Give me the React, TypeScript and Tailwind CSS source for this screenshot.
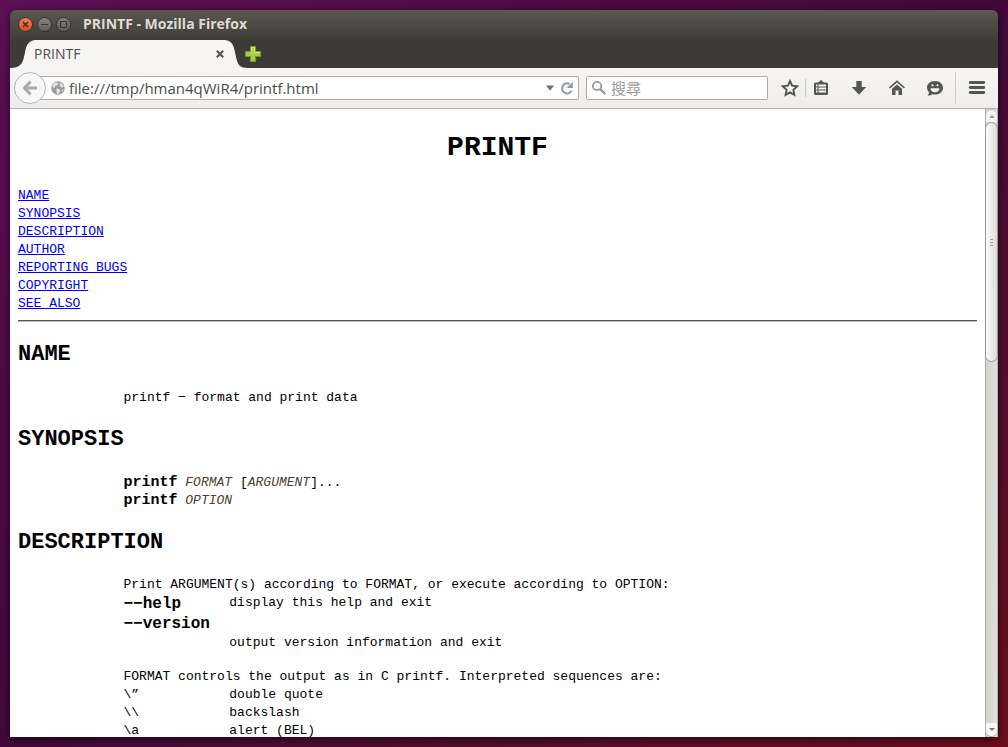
import React, { useState } from 'react';

const toc = ['NAME', 'SYNOPSIS', 'DESCRIPTION', 'AUTHOR', 'REPORTING BUGS', 'COPYRIGHT', 'SEE ALSO'];

const escapes = [
  { seq: '\\”', text: 'double quote' },
  { seq: '\\\\', text: 'backslash' },
  { seq: '\\a', text: 'alert (BEL)' },
];

const TitleBar = () => (
  <header className="flex h-[30px] items-center bg-linear-to-b from-[#5b5850] to-[#3e3d39] px-2 pb-0.5">
    <div className="flex gap-1">
      <button aria-label="Close" className="flex size-[15px] items-center justify-center rounded-full border border-[#33322e] bg-linear-to-b from-[#f37a54] to-[#dc4e1f] text-[#4a2010]">
        <svg viewBox="0 0 9 9" className="size-[9px]" stroke="currentColor" strokeWidth="1.4"><path d="M2 2l5 5M7 2L2 7" /></svg>
      </button>
      <button aria-label="Minimize" className="flex size-[15px] items-center justify-center rounded-full border border-[#33322e] bg-linear-to-b from-[#85837b] to-[#63615a] text-[#35342f]">
        <svg viewBox="0 0 9 9" className="size-[9px]" stroke="currentColor" strokeWidth="1.2"><path d="M1 4.500h7" /></svg>
      </button>
      <button aria-label="Maximize" className="flex size-[15px] items-center justify-center rounded-full border border-[#33322e] bg-linear-to-b from-[#85837b] to-[#63615a] text-[#35342f]">
        <svg viewBox="0 0 9 9" className="size-[9px]" fill="none" stroke="currentColor" strokeWidth="1.2"><path d="M1.500 1.500h6v6h-6z" /></svg>
      </button>
    </div>
    <p className="ml-3 text-sm font-bold text-[#dfdbd2]">PRINTF - Mozilla Firefox</p>
  </header>
);

const TabBar = () => (
  <div className="flex h-7 items-end bg-[#3c3b37]">
    <svg viewBox="0 0 28 28" className="h-7 w-7 shrink-0">
      <path d="M0 28C8 28 12 25 13.500 19L15.500 10C17 3 20 0 28 0V28Z" fill="#f6f5f4" />
    </svg>
    <div className="-ml-1 flex h-7 w-[190px] items-center justify-between bg-[#f6f5f4] text-[#4c4c4c]">
      <span className="text-sm">PRINTF</span>
      <button aria-label="Close tab" className="text-[#555551]">
        <svg viewBox="0 0 8 8" className="size-2" stroke="currentColor" strokeWidth="2.2"><path d="M.8.8l6.400 6.400M7.200.8L.8 7.200" /></svg>
      </button>
    </div>
    <svg viewBox="4 0 24 28" className="h-7 w-6 shrink-0">
      <path d="M28 28C20 28 18 25 16.500 19L14.500 10C13 3 10 0 2 0H0V28Z" fill="#f6f5f4" />
    </svg>
    <button aria-label="New tab" className="-ml-1 mb-[5px]">
      <svg viewBox="0 0 18 18" className="size-[18px]">
        <path d="M6.500 1.500h5v5h5v5h-5v5h-5v-5h-5v-5h5z" fill="#a9cc4c" stroke="#6f9a23" strokeWidth="1.200" />
        <path d="M7.500 7.500v-5h3v5h5" fill="none" stroke="#d5ea8b" />
      </svg>
    </button>
  </div>
);

const ToolButton = ({ label, children }: { label: string; children: React.ReactNode }) => (
  <button aria-label={label} className="flex h-8 w-[30px] shrink-0 items-center justify-center text-[#555552]">
    <svg viewBox="0 0 18 18" className="size-[18px]">{children}</svg>
  </button>
);

const NavBar = () => {
  const [url, setUrl] = useState('file:///tmp/hman4qWiR4/printf.html');
  const [query, setQuery] = useState('');

  return (
    <nav className="flex h-[41px] items-center border-b border-[#b5b0a8] bg-linear-to-b from-[#f6f5f4] to-[#eeedeb] pr-1.5 pl-1">
      <button aria-label="Back" className="z-10 flex size-8 shrink-0 items-center justify-center rounded-full border border-[#b2b5ba] bg-[#f7f7f7] text-[#aaa]">
        <svg viewBox="0 0 16 16" className="size-4" fill="none" stroke="currentColor" strokeWidth="3"><path d="M8.500 1.500L2.500 8l6 6.500M3 8h12" /></svg>
      </button>
      <div className="-ml-2 flex h-6 min-w-0 flex-1 items-center rounded-r-xs border border-[#b0aca5] bg-white pl-3">
        <svg viewBox="0 0 14 14" className="size-3.5 shrink-0">
          <circle cx="7" cy="7" r="6.800" fill="#9c9c9c" />
          <path d="M2.200 2.800L5 1.200l2.200 1L6 4.300 4 5 3.500 7 1.500 6.300zM8.500 2l2.800.8 1.500 3-2 .7L9 5zM5.500 7.500l3 .8.800 1.700-2 3-1.500-.5zM10.500 9l2-.8-1 2.600z" fill="#e4e4e4" />
        </svg>
        <input aria-label="Address" value={url} onChange={e => setUrl(e.target.value)} className="ml-1 min-w-0 flex-1 bg-transparent text-[15px] text-[#4c4c4c] outline-none" />
        <button aria-label="Show history" className="text-[#73716d]">
          <svg viewBox="0 0 8 6" className="h-1.5 w-2" fill="currentColor"><path d="M0 .5h8L4 5.800z" /></svg>
        </button>
        <button aria-label="Reload" className="mr-1 ml-1.5 text-[#8b9bb0]">
          <svg viewBox="0 0 14 14" className="size-3.5">
            <path d="M11.600 9.800A5 5 0 1 1 9.500 3" fill="none" stroke="currentColor" strokeWidth="2.200" />
            <path d="M12.800.8v6.200H6.600z" fill="currentColor" />
          </svg>
        </button>
      </div>
      <div className="mx-[7px] flex h-6 w-[182px] items-center rounded-xs border border-[#b0aca5] bg-white pl-1">
        <svg viewBox="0 0 16 16" className="size-4 shrink-0" fill="none" stroke="#999">
          <circle cx="6" cy="6" r="4.200" strokeWidth="1.800" />
          <path d="M9.200 9.200l5 5" strokeWidth="2.400" />
        </svg>
        <input aria-label="搜尋" placeholder="搜尋" value={query} onChange={e => setQuery(e.target.value)} className="ml-1 min-w-0 flex-1 bg-transparent text-[15px] outline-none placeholder:text-[#999]" />
      </div>
      <ToolButton label="Bookmark this page">
        <path d="M9 2l2.100 4.700 5.100.6-3.800 3.500 1 5L9 13.300l-4.400 2.500 1-5-3.800-3.500 5.100-.6z" fill="none" stroke="currentColor" strokeWidth="1.900" />
      </ToolButton>
      <div className="h-[18px] w-px bg-[#c8c8c8]" />
      <ToolButton label="Bookmarks">
        <path d="M3.500 3.500H6L9 1l3 2.500h2.500a1.500 1.500 0 0 1 1.500 1.500v9.500a1.500 1.500 0 0 1-1.500 1.500h-11A1.500 1.500 0 0 1 2 14.500V5a1.500 1.500 0 0 1 1.500-1.500z" fill="currentColor" />
        <path d="M4 6.500h1.500M4 9.500h1.500M4 12.500h1.500M6.500 6.500h7.500M6.500 9.500h7.500M6.500 12.500h7.500" stroke="#f4f4f4" strokeWidth="1.800" />
      </ToolButton>
      <div className="ml-2 flex gap-2">
        <ToolButton label="Downloads">
          <path d="M6.300 2h5.400v6h4.500L9 15.800 1.800 8h4.500z" fill="currentColor" />
        </ToolButton>
        <ToolButton label="Home">
          <path d="M1.500 9L9 2.300 16.500 9" fill="none" stroke="currentColor" strokeWidth="1.600" />
          <path d="M4 9.800l5-4.400 5 4.400V16h-3.500v-4.500h-3V16H4z" fill="currentColor" />
        </ToolButton>
        <ToolButton label="Chat">
          <path d="M9 2c4.700 0 8 2.900 8 6.800S13.700 15.600 9 15.600c-1 0-2-.1-2.800-.4-1.200.9-2.700 1.300-4.700 1.200 1-.7 1.500-1.600 1.500-2.800A6.500 6.500 0 0 1 1 8.800C1 4.900 4.300 2 9 2z" fill="currentColor" />
          <path d="M4.500 9.300h9c-.3 2.600-2 3.900-4.500 3.900s-4.200-1.300-4.500-3.900z" fill="#f4f4f4" />
          <circle cx="6.500" cy="6.300" r="1.100" fill="#f4f4f4" />
          <circle cx="11.500" cy="6.300" r="1.100" fill="#f4f4f4" />
        </ToolButton>
      </div>
      <div className="mr-1.5 ml-[5px] h-8 w-px bg-[#ccc]" />
      <ToolButton label="Menu">
        <path d="M2.200 3.500h13.600M2.200 8.500h13.600M2.200 13.500h13.600" stroke="currentColor" strokeWidth="2.800" strokeLinecap="round" />
      </ToolButton>
    </nav>
  );
};

const Scrollbar = () => (
  <div className="flex w-[13px] shrink-0 flex-col border-x border-[#b0aea9] bg-linear-to-r from-[#d2d1ce] to-[#e2e1df]">
    <button aria-label="Scroll up" className="flex h-[13px] items-center justify-center rounded-t-full border-t border-[#b0aea9] bg-[#f4f4f3] text-[#999]">
      <svg viewBox="0 0 6 3" className="h-[3px] w-1.5" fill="currentColor"><path d="M0 3h6L3 0z" /></svg>
    </button>
    <div className="min-h-0 flex-1">
      <div className="-mx-px flex h-[40%] flex-col items-center justify-center gap-0.5 rounded-full border border-[#999792] bg-linear-to-r from-[#fbfbfa] to-[#dddbd8]">
        <span className="h-px w-[3px] bg-[#999]" />
        <span className="h-px w-[3px] bg-[#999]" />
        <span className="h-px w-[3px] bg-[#999]" />
      </div>
    </div>
    <button aria-label="Scroll down" className="flex h-[14px] items-center justify-center rounded-b-full border-b border-[#b0aea9] bg-[#f8f8f7] text-[#777]">
      <svg viewBox="0 0 6 3" className="h-[3px] w-1.5" fill="currentColor"><path d="M0 0h6L3 3z" /></svg>
    </button>
  </div>
);

const Heading = ({ children }: { children: string }) => (
  <h2 id={children} className="mt-[19px] text-[22px] leading-7 font-bold">{children}</h2>
);

const ManPage = () => (
  <main className="min-w-0 flex-1 overflow-hidden bg-white px-2 pt-[23px] font-['Liberation_Mono','Noto_Sans_CJK_TC',monospace] text-[13px] leading-[18px] text-black">
    <h1 className="mb-[23px] text-center text-[28px] leading-8 font-bold">PRINTF</h1>
    <ul>
      {toc.map(item => (
        <li key={item}><a href={`#${item}`} className="text-[#0000ee] underline">{item}</a></li>
      ))}
    </ul>
    <hr className="mt-[7px] h-0.5 border-t border-b border-t-[#555] border-b-[#bbb]" />

    <Heading>NAME</Heading>
    <p className="mt-5 ml-[11%]">printf − format and print data</p>

    <Heading>SYNOPSIS</Heading>
    <p className="mt-5 ml-[11%]">
      <b className="text-[15px]">printf</b> <i className="text-[#4a4030]">FORMAT</i> [<i className="text-[#4a4030]">ARGUMENT</i>]...<br />
      <b className="text-[15px]">printf</b> <i className="text-[#4a4030]">OPTION</i>
    </p>

    <Heading>DESCRIPTION</Heading>
    <p className="mt-[19px] ml-[11%]">Print ARGUMENT(s) according to FORMAT, or execute according to OPTION:</p>
    <dl className="ml-[11%] grid grid-cols-[12.4%_1fr]">
      <dt className="text-base leading-5 font-bold">−−help</dt>
      <dd>display this help and exit</dd>
      <dt className="col-span-2 text-base leading-5 font-bold">−−version</dt>
      <dd className="col-start-2">output version information and exit</dd>
    </dl>
    <p className="mt-4 ml-[11%]">FORMAT controls the output as in C printf. Interpreted sequences are:</p>
    <dl className="ml-[11%] grid grid-cols-[12.4%_1fr]">
      {escapes.map(({ seq, text }) => (
        <React.Fragment key={seq}>
          <dt>{seq}</dt>
          <dd>{text}</dd>
        </React.Fragment>
      ))}
    </dl>
  </main>
);

export default function App() {
  return (
    <div className="flex h-screen bg-linear-to-br from-[#5e1055] via-[#43083a] to-[#6b0d1c] p-2.5 font-['Open_Sans','Noto_Sans_CJK_TC',sans-serif]">
      <div className="flex min-w-0 flex-1 flex-col overflow-hidden rounded-t-md shadow-[0_2px_10px_rgba(0,0,0,0.6)]">
        <TitleBar />
        <TabBar />
        <NavBar />
        <div className="flex min-h-0 flex-1">
          <ManPage />
          <Scrollbar />
        </div>
      </div>
    </div>
  );
}
